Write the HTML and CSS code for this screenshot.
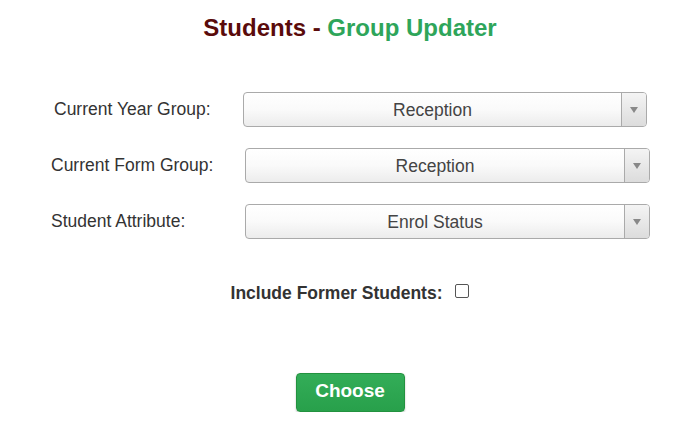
FILE: index.html
```html
<!DOCTYPE html>
<html>
<head>
<meta charset="utf-8">
<link rel="stylesheet" href="styles.css">
</head>
<body>
<div class="page">
  <h1 class="title"><span class="title-main">Students - </span><span class="title-sub">Group Updater</span></h1>
  <div class="form">
    <div class="row row-first">
      <label class="label">Current Year Group:</label>
      <div class="select"><span class="select-text">Reception</span><span class="select-arrow"><span class="tri"></span></span></div>
    </div>
    <div class="row">
      <label class="label">Current Form Group:</label>
      <div class="select"><span class="select-text">Reception</span><span class="select-arrow"><span class="tri"></span></span></div>
    </div>
    <div class="row">
      <label class="label">Student Attribute:</label>
      <div class="select"><span class="select-text">Enrol Status</span><span class="select-arrow"><span class="tri"></span></span></div>
    </div>
  </div>
  <div class="check-row">
    <span class="check-label">Include Former Students:</span>
    <span class="checkbox"></span>
  </div>
  <div class="actions">
    <button class="btn">Choose</button>
  </div>
</div>
</body>
</html>
```
FILE: styles.css
```css
html, body {
  margin: 0;
  padding: 0;
  background: #fff;
}
body {
  font-family: "Liberation Sans", Arial, sans-serif;
  color: #333;
}
.page {
  width: 672px;
  padding-left: 14px;
}
.title {
  margin: 0;
  padding-top: 14px;
  text-align: center;
  font-size: 24px;
  line-height: 28px;
  font-weight: bold;
}
.title-main { color: #5a0b0b; }
.title-sub { color: #2ea55a; }

.form {
  margin-top: 50px;
  display: flex;
  flex-direction: column;
  gap: 21px;
  margin-left: 37px;
}
.row {
  display: flex;
  align-items: center;
}
.label {
  width: 194px;
  font-size: 17.5px;
  color: #333;
}
.row-first .label {
  padding-left: 3px;
  width: 189px;
}
.row-first .select {
  width: 402px;
}
.select {
  width: 403px;
  height: 33px;
  border: 1px solid #aaa;
  border-radius: 4px;
  background: linear-gradient(#ffffff 0%, #fafafa 50%, #ececec 100%);
  display: flex;
  overflow: hidden;
}
.select-text {
  flex: 1;
  text-align: center;
  font-size: 17.5px;
  line-height: 35px;
  color: #444;
}
.select-arrow {
  width: 24px;
  border-left: 1px solid #aaa;
  background: linear-gradient(#f4f4f4, #dcdcdc);
  display: flex;
  align-items: center;
  justify-content: center;
}
.tri {
  width: 0;
  height: 0;
  border-left: 4px solid transparent;
  border-right: 4px solid transparent;
  border-top: 6px solid #888;
}
.check-row {
  margin-top: 44px;
  display: flex;
  justify-content: center;
  align-items: center;
  gap: 13px;
}
.check-label {
  font-size: 17.5px;
  font-weight: bold;
  color: #333;
}
.checkbox {
  width: 12px;
  height: 12px;
  border: 1px solid #555;
  border-radius: 2px;
  background: #fff;
  margin-top: -6px;
}
.actions {
  margin-top: 69px;
  display: flex;
  justify-content: center;
}
.btn {
  width: 109px;
  height: 39px;
  border: 1px solid #23923f;
  border-radius: 4px;
  background: linear-gradient(#33ad58, #28a04b);
  color: #fff;
  font-family: "Liberation Sans", Arial, sans-serif;
  font-size: 19px;
  font-weight: bold;
  box-shadow: 0 1px 2px rgba(0,0,0,0.25);
  padding: 0 0 3px 0;
}
```
